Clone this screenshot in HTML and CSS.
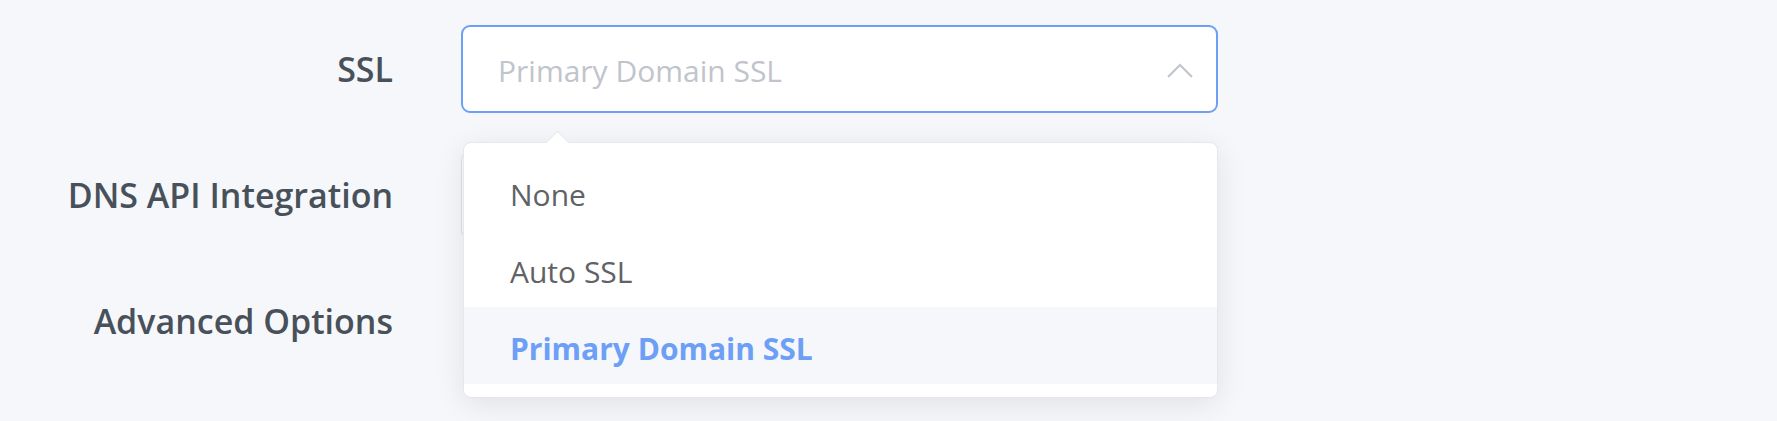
FILE: index.html
```html
<!DOCTYPE html>
<html lang="en">
  <head>
    <meta charset="UTF-8" />
    <meta name="viewport" content="width=device-width, initial-scale=1.0" />
    <title>Site settings</title>
    <link rel="stylesheet" href="styles.css">
  </head>
  <body>
    <form class="form">
      <div class="form-item">
        <label class="form-label">SSL</label>
        <div class="form-content">
          <div class="select">
            <div class="select-input is-focus">
              <span class="select-placeholder">Primary Domain SSL</span>
              <svg class="select-chevron" width="26" height="15" viewBox="0 0 26 15">
                <path d="M1 14 L13 2 L25 14" fill="none" stroke="currentColor" stroke-width="2" />
              </svg>
            </div>
            <div class="dropdown">
              <span class="dropdown-arrow"></span>
              <ul class="dropdown-list">
                <li class="dropdown-item">None</li>
                <li class="dropdown-item">Auto SSL</li>
                <li class="dropdown-item is-selected">Primary Domain SSL</li>
              </ul>
            </div>
          </div>
        </div>
      </div>
      <div class="form-item">
        <label class="form-label">DNS API Integration</label>
        <div class="form-content">
          <div class="select">
            <div class="select-input"></div>
          </div>
        </div>
      </div>
      <div class="form-item">
        <label class="form-label">Advanced Options</label>
        <div class="form-content"></div>
      </div>
    </form>
  </body>
</html>
```

FILE: styles.css
```css
:root {
  font-family: "Open Sans", "Noto Sans", sans-serif;
  color: #606266;
  background: #f5f7fa;
}

body {
  margin: 0;
  min-height: 100vh;
}

.form {
  display: flex;
  flex-direction: column;
  gap: 38px;
  padding: 25px 0 60px;
}

.form-item {
  display: flex;
  align-items: center;
  height: 88px;
}

.form-label {
  width: 393px;
  margin-right: 68px;
  text-align: right;
  font-size: 34px;
  font-weight: 600;
  color: #48505a;
}

.form-content {
  width: 757px;
  height: 100%;
}

.select {
  position: relative;
  height: 100%;
}

.select-input {
  box-sizing: border-box;
  display: flex;
  align-items: center;
  justify-content: space-between;
  height: 100%;
  padding: 2px 23px 0 35px;
  background: #fff;
  border: 1px solid #dcdfe6;
  border-radius: 9px;

  &.is-focus {
    border: 2px solid #6c9ff5;
  }
}

.select-placeholder {
  font-size: 30px;
  color: #c0c4cc;
}

.select-chevron {
  color: #c0c4cc;
}

.dropdown {
  position: absolute;
  top: 117px;
  left: 2px;
  z-index: 10;
  box-sizing: border-box;
  width: 755px;
  padding: 10px 0 13px;
  background: #fff;
  border: 1px solid #e4e7ed;
  border-radius: 8px;
  box-shadow: 0 6px 30px rgba(0, 0, 0, 0.09);
}

.dropdown-arrow {
  position: absolute;
  top: -9px;
  left: 85px;
  width: 16px;
  height: 16px;
  background: #fff;
  border-top: 1px solid #e4e7ed;
  border-left: 1px solid #e4e7ed;
  transform: rotate(45deg);
}

.dropdown-list {
  position: relative;
  margin: 0;
  padding: 0;
  list-style: none;
}

.dropdown-item {
  display: flex;
  align-items: center;
  box-sizing: border-box;
  height: 77px;
  padding: 5px 46px 0;
  font-size: 30px;
  color: #606266;

  &.is-selected {
    background: #f5f7fa;
    color: #6c9ff5;
    font-weight: 700;
  }
}
```
